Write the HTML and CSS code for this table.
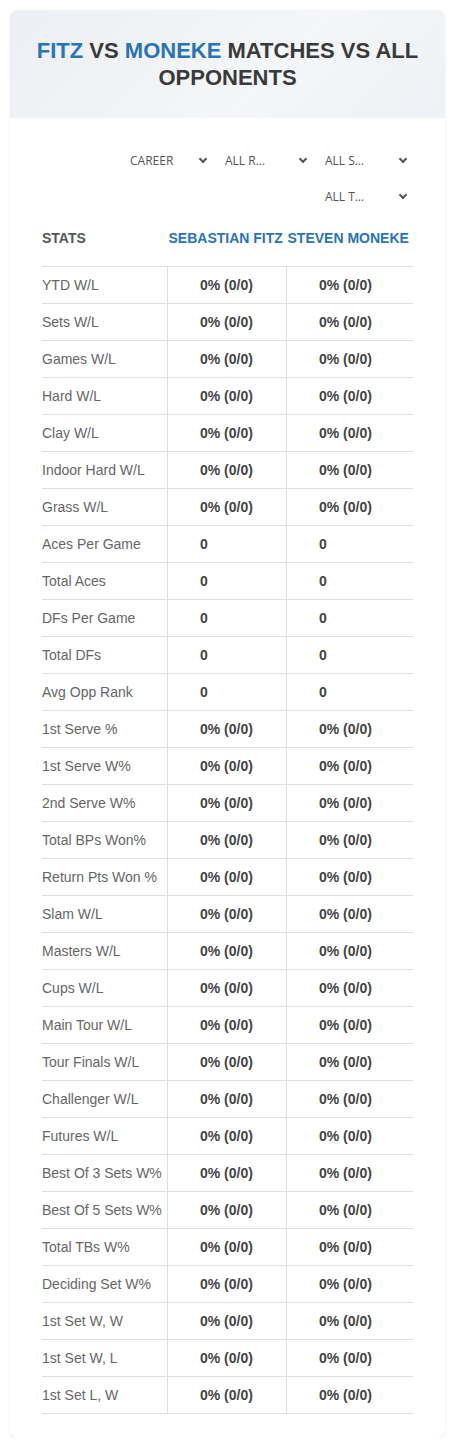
FILE: index.html
```html
<!DOCTYPE html>
<html lang="en">
<head>
    <meta charset="UTF-8">
    <meta name="viewport" content="width=device-width, initial-scale=1.0">
    <title>Fitz vs Moneke</title>
    <link rel="stylesheet" href="styles.css">
</head>
<body>

    <div class="card">
        <!-- Title -->
        <header class="card-head">
            <h1><span class="blue">FITZ</span> VS <span class="blue">MONEKE</span> MATCHES VS ALL OPPONENTS</h1>
        </header>

        <!-- Filters -->
        <div class="filters">
            <div class="select narrow">CAREER <span class="chev"></span></div>
            <div class="select">ALL R… <span class="chev"></span></div>
            <div class="select">ALL S… <span class="chev"></span></div>
            <div class="select">ALL T… <span class="chev"></span></div>
        </div>

        <!-- Stats table -->
        <table class="stats">
            <thead>
                <tr>
                    <th class="label">STATS</th>
                    <th class="player">SEBASTIAN FITZ</th>
                    <th class="player">STEVEN MONEKE</th>
                </tr>
            </thead>
            <tbody id="rows"></tbody>
        </table>
    </div>

    <script>
        const pct = '0% (0/0)';
        const rows = [
            ['YTD W/L', pct], ['Sets W/L', pct], ['Games W/L', pct], ['Hard W/L', pct],
            ['Clay W/L', pct], ['Indoor Hard W/L', pct], ['Grass W/L', pct],
            ['Aces Per Game', '0'], ['Total Aces', '0'], ['DFs Per Game', '0'],
            ['Total DFs', '0'], ['Avg Opp Rank', '0'],
            ['1st Serve %', pct], ['1st Serve W%', pct], ['2nd Serve W%', pct],
            ['Total BPs Won%', pct], ['Return Pts Won %', pct], ['Slam W/L', pct],
            ['Masters W/L', pct], ['Cups W/L', pct], ['Main Tour W/L', pct],
            ['Tour Finals W/L', pct], ['Challenger W/L', pct], ['Futures W/L', pct],
            ['Best Of 3 Sets W%', pct], ['Best Of 5 Sets W%', pct], ['Total TBs W%', pct],
            ['Deciding Set W%', pct], ['1st Set W, W', pct], ['1st Set W, L', pct],
            ['1st Set L, W', pct]
        ];

        // Build the table body
        const body = document.getElementById('rows');
        rows.forEach(r => {
            body.innerHTML += `
                <tr>
                    <td class="label">${r[0]}</td>
                    <td class="val">${r[1]}</td>
                    <td class="val">${r[1]}</td>
                </tr>`;
        });
    </script>

</body>
</html>
```

FILE: styles.css
```css
body {
    font-family: "Liberation Sans", Arial, sans-serif;
    margin: 0;
    padding: 10px 10px 0;
    background-color: #fff;
}
.card {
    background-color: #fff;
    border-radius: 8px;
    box-shadow: 0 1px 3px rgba(0, 0, 0, 0.08);
    padding-bottom: 24px;
}
.card-head {
    background: linear-gradient(135deg, #eceff3 0%, #f4f6f9 60%, #eef1f5 100%);
    border-radius: 8px 8px 0 0;
    padding: 27px 14px 27px;
    text-align: center;
}
.card-head h1 {
    margin: 0;
    font-size: 22px;
    line-height: 27px;
    font-weight: bold;
    color: #3a3a3a;
}
.blue {
    color: #2a73b4;
}
.filters {
    display: flex;
    flex-wrap: wrap;
    justify-content: flex-end;
    gap: 8px 5px;
    width: 290px;
    margin: 28px 32px 0 auto;
}
.select {
    width: 95px;
    height: 28px;
    box-sizing: border-box;
    padding: 0 5px 0 7px;
    display: flex;
    align-items: center;
    justify-content: space-between;
    font-family: "Open Sans", sans-serif;
    font-size: 12px;
    color: #555;
}
.select.narrow {
    width: 90px;
}
.chev {
    width: 4px;
    height: 4px;
    border-right: 2px solid #555;
    border-bottom: 2px solid #555;
    transform: rotate(45deg);
    margin-top: -2px;
    margin-right: 2px;
}
.stats {
    width: 371px;
    margin: 0 0 0 32px;
    border-collapse: collapse;
    font-size: 14px;
}
.stats th {
    height: 56px;
    padding: 0;
    text-align: left;
    font-size: 14px;
    font-weight: bold;
    border-bottom: 1px solid #dde0e3;
    white-space: nowrap;
}
.stats th.label {
    color: #555;
}
.stats th.player {
    color: #2a73b4;
    padding-left: 1px;
}
.stats td {
    height: 36px;
    padding: 0;
    border-bottom: 1px solid #dde0e3;
}
.stats td.label {
    width: 125px;
    color: #666;
}
.stats td.val {
    width: 86px;
    padding-left: 32px;
    border-left: 1px solid #dde0e3;
    font-weight: bold;
    color: #444;
}
.stats td.val:last-child {
    width: 94px;
}
```
